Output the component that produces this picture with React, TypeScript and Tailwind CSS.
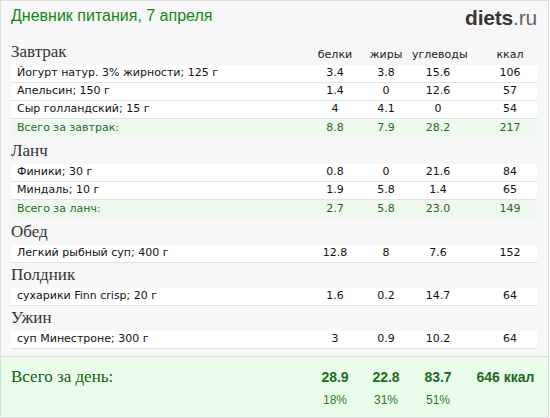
import React from 'react'

type Item = { name: string; p: string; f: string; c: string; k: string }
type Meal = { title: string; items: Item[]; total?: Item }

const meals: Meal[] = [
  {
    title: 'Завтрак',
    items: [
      { name: 'Йогурт натур. 3% жирности; 125 г', p: '3.4', f: '3.8', c: '15.6', k: '106' },
      { name: 'Апельсин; 150 г', p: '1.4', f: '0', c: '12.6', k: '57' },
      { name: 'Сыр голландский; 15 г', p: '4', f: '4.1', c: '0', k: '54' },
    ],
    total: { name: 'Всего за завтрак:', p: '8.8', f: '7.9', c: '28.2', k: '217' },
  },
  {
    title: 'Ланч',
    items: [
      { name: 'Финики; 30 г', p: '0.8', f: '0', c: '21.6', k: '84' },
      { name: 'Миндаль; 10 г', p: '1.9', f: '5.8', c: '1.4', k: '65' },
    ],
    total: { name: 'Всего за ланч:', p: '2.7', f: '5.8', c: '23.0', k: '149' },
  },
  {
    title: 'Обед',
    items: [{ name: 'Легкий рыбный суп; 400 г', p: '12.8', f: '8', c: '7.6', k: '152' }],
  },
  {
    title: 'Полдник',
    items: [{ name: 'сухарики Finn crisp; 20 г', p: '1.6', f: '0.2', c: '14.7', k: '64' }],
  },
  {
    title: 'Ужин',
    items: [{ name: 'суп Минестроне; 300 г', p: '3', f: '0.9', c: '10.2', k: '64' }],
  },
]

const grid = 'grid grid-cols-[1fr_50px_52px_52px_73px]'
const serif = "font-['Liberation_Serif',serif]"
const verdana = "font-['DejaVu_Sans',sans-serif]"
const arial = "font-['Liberation_Sans',sans-serif]"

function Row({ item, total }: { item: Item; total?: boolean }) {
  return (
    <div
      className={`${grid} items-center h-[18px] pl-[6px] text-[11px] ${verdana} ${
        total ? 'bg-[#eef8ee] text-[#1b6e1b] mb-[2px]' : 'bg-white text-[#111] border-b border-[#e3e3e3]'
      }`}
    >
      <span>{item.name}</span>
      <span className="text-center">{item.p}</span>
      <span className="text-center">{item.f}</span>
      <span className="text-center">{item.c}</span>
      <span className="text-center pl-[19px]">{item.k}</span>
    </div>
  )
}

export default function App() {
  return (
    <div className="w-[549px] h-[418px] bg-[#f7f7f7] border-t border-l border-r border-[#dcdcdc] flex flex-col">
      <div className="h-[39px] px-[10px] flex items-start justify-between pt-[5px]">
        <h1 className={`text-[16px] leading-[20px] text-[#108a10] ${arial}`}>Дневник питания, 7 апреля</h1>
        <div className={`mr-[1px] text-[21px] leading-[24px] ${arial} tracking-[-0.2px]`}>
          <span className="font-bold text-[#363636]">diets</span>
          <span className="text-[#666]">.ru</span>
        </div>
      </div>

      <div className="px-[10px] mr-[1px]">
        {meals.map((meal, i) => (
          <div key={meal.title}>
            <div className={`${grid} items-end h-[25px] pb-[3px]`}>
              <span className={`${serif} text-[17px] leading-[20px] text-[#333]`}>{meal.title}</span>
              {i === 0 && (
                <>
                  <span className={`${verdana} text-center text-[11px] leading-[14px] text-[#222]`}>белки</span>
                  <span className={`${verdana} text-center text-[11px] leading-[14px] text-[#222]`}>жиры</span>
                  <span className={`${verdana} text-center text-[11px] leading-[14px] text-[#222]`}>углеводы</span>
                  <span className={`${verdana} text-center text-[11px] leading-[14px] text-[#222] pl-[19px]`}>ккал</span>
                </>
              )}
            </div>
            {meal.items.map((it) => (
              <Row key={it.name} item={it} />
            ))}
            {meal.total && <Row total item={meal.total} />}
          </div>
        ))}
      </div>

      <div className="mt-auto h-[62px] bg-[#eafdea] border-t border-b border-[#dcdcdc] px-[10px] pt-[10px]">
        <div className={`${grid} mr-[1px]`}>
          <span className={`${serif} text-[17px] leading-[20px] text-[#135f13]`}>Всего за день:</span>
          <span className={`text-center font-bold text-[14px] leading-[20px] text-[#1f6b1f] ${arial}`}>28.9</span>
          <span className={`text-center font-bold text-[14px] leading-[20px] text-[#1f6b1f] ${arial}`}>22.8</span>
          <span className={`text-center font-bold text-[14px] leading-[20px] text-[#1f6b1f] ${arial}`}>83.7</span>
          <span className={`text-center font-bold text-[14px] leading-[20px] text-[#1f6b1f] ${arial} pl-[10px]`}>646 ккал</span>
          <span />
          <span className={`text-center text-[12px] leading-[26px] text-[#2b7a2b] ${arial}`}>18%</span>
          <span className={`text-center text-[12px] leading-[26px] text-[#2b7a2b] ${arial}`}>31%</span>
          <span className={`text-center text-[12px] leading-[26px] text-[#2b7a2b] ${arial}`}>51%</span>
          <span />
        </div>
      </div>
    </div>
  )
}
